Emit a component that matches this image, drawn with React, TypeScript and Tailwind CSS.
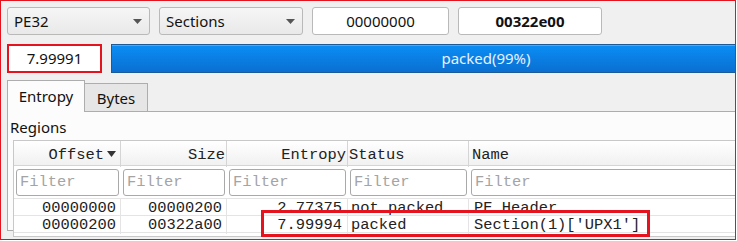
const ui = { fontFamily: '"Noto Sans", "Open Sans", sans-serif' };
const mono = { fontFamily: '"Liberation Mono", "Courier New", monospace' };

const Combo = ({ label, width }: { label: string; width: string }) => (
    <div className={`${width} shrink-0 h-full flex items-center justify-between pl-[6px] pr-[7px] rounded-[3px] border border-[#b9b9b9] bg-gradient-to-b from-[#f6f6f6] to-[#e9e9e9]`}>
        <span className="text-[15px] text-[#111]">{label}</span>
        <svg width="9" height="5" viewBox="0 0 9 5">
            <path d="M0 0 L9 0 L4.5 5 Z" fill="#555" />
        </svg>
    </div>
);

const Field = ({ value, width, bold }: { value: string; width: string; bold?: boolean }) => (
    <div className={`${width} shrink-0 h-full flex items-center justify-center rounded-[3px] border border-[#b9b9b9] bg-white text-[15px] text-[#111] ${bold ? "font-bold" : ""}`}>
        {value}
    </div>
);

const rows = [
    ["00000000", "00000200", "2.77375", "not packed", "PE Header"],
    ["00000200", "00322a00", "7.99994", "packed", "Section(1)['UPX1']"],
];

const cols = "grid grid-cols-[107px_106px_121px_121px_1fr]";

const App = () => {
    return (
        <div className="relative w-[736px] h-[240px] overflow-hidden bg-[#f0f0f0] border border-[#e5131d]" style={ui}>
            <div className="flex flex-col pl-[6px] pt-[6px]">
                {/* top controls */}
                <div className="flex h-[28px] gap-[9px]">
                    <Combo label="PE32" width="w-[143px]" />
                    <Combo label="Sections" width="w-[144px]" />
                    <Field value="00000000" width="w-[137px]" />
                    <Field value="00322e00" width="w-[144px]" bold />
                </div>

                {/* entropy value + progress */}
                <div className="flex h-[29px] gap-[9px] mt-[9px]">
                    <div className="w-[95px] shrink-0 h-full flex items-center justify-center bg-white border-2 border-[#e5131d] text-[15px] text-[#111]">
                        7.99991
                    </div>
                    <div className="w-[750px] shrink-0 h-full flex items-center justify-center border border-[#1e5a96] bg-gradient-to-b from-[#0b8ef5] to-[#0a6fd2] shadow-[inset_0_1px_0_#49aaf5]">
                        <span className="text-[15px] text-[#e8f2ff]">packed(99%)</span>
                    </div>
                </div>

                {/* tabs */}
                <div className="flex items-end h-[31px] mt-[8px]">
                    <div className="w-[78px] shrink-0 h-[32px] flex items-center justify-center bg-[#fcfcfc] border border-b-0 border-[#adadad] relative z-10 text-[15px] text-[#111]">
                        Entropy
                    </div>
                    <div className="w-[63px] shrink-0 h-[29px] flex items-center justify-center bg-[#e6e6e6] border border-l-0 border-b-0 border-[#adadad] text-[15px] text-[#111]">
                        Bytes
                    </div>
                </div>

                {/* pane */}
                <div className="w-[800px] h-[120px] -mt-px bg-[#fcfcfc] border border-[#adadad] pl-[1px] pt-[6px]">
                    <div className="text-[15px] leading-[18px] text-[#111] pl-[1px]">Regions</div>
                    <div className="ml-[4px] mt-[4px] border border-[#c8c8c8] bg-white" style={mono}>
                        {/* header */}
                        <div className={`${cols} h-[25px] bg-gradient-to-b from-[#ffffff] to-[#f1f1f1] border-b border-[#d5d5d5] text-[15.4px] text-[#222]`}>
                            <div className="flex items-center justify-end pt-[3px] pr-[4px] gap-[3px] border-r border-[#d5d5d5]">
                                <span>Offset</span>
                                <svg width="9" height="6" viewBox="0 0 9 6" className="mb-[3px]">
                                    <path d="M0 0 L9 0 L4.5 6 Z" fill="#333" />
                                </svg>
                            </div>
                            <div className="flex items-center justify-end pt-[3px] pr-[1px] border-r border-[#d5d5d5]">Size</div>
                            <div className="flex items-center justify-end pt-[3px] pr-[1px] border-r border-[#d5d5d5]">Entropy</div>
                            <div className="flex items-center pt-[3px] pl-[1px] border-r border-[#d5d5d5]">Status</div>
                            <div className="flex items-center pt-[3px] pl-[3px]">Name</div>
                        </div>
                        {/* filters */}
                        <div className={`${cols} h-[33px] border-b border-[#e4e4e4]`}>
                            {[0, 1, 2, 3, 4].map((i) => (
                                <div key={i} className="px-[2px] pt-[3px] pb-[2px]">
                                    <div className="h-full flex items-center pl-[3px] rounded-[3px] border border-[#a9a9a9] bg-white text-[15.4px] text-[#a4a4a4]">
                                        Filter
                                    </div>
                                </div>
                            ))}
                        </div>
                        {/* data rows */}
                        {rows.map((r, ri) => (
                            <div key={ri} className={`${cols} h-[17px] border-b border-[#e4e4e4] text-[15.4px] leading-[17px] text-[#222]`}>
                                <div className="pt-[1px] text-right pr-[4px] border-r border-[#e4e4e4]">{r[0]}</div>
                                <div className="pt-[1px] text-right pr-[4px] border-r border-[#e4e4e4]">{r[1]}</div>
                                <div className="pt-[1px] text-right pr-[5px] border-r border-[#e4e4e4]">{r[2]}</div>
                                <div className="pt-[1px] pl-[3px] border-r border-[#e4e4e4] whitespace-nowrap">{r[3]}</div>
                                <div className="pt-[1px] pl-[5px] whitespace-nowrap">{r[4]}</div>
                            </div>
                        ))}
                        <div className="h-[3px]" />
                    </div>
                </div>
            </div>

            {/* splitter handle */}
            <div className="absolute left-[523px] top-[235px] flex gap-[2px]">
                {[0, 1, 2, 3, 4].map((i) => (
                    <span key={i} className="w-[1px] h-[1px] bg-[#a0a0a0]" />
                ))}
            </div>

            {/* annotation over the packed row */}
            <div className="absolute left-[260px] top-[209px] w-[389px] h-[27px] border-[3px] border-[#e5131d]" />
        </div>
    );
};

export default App;
